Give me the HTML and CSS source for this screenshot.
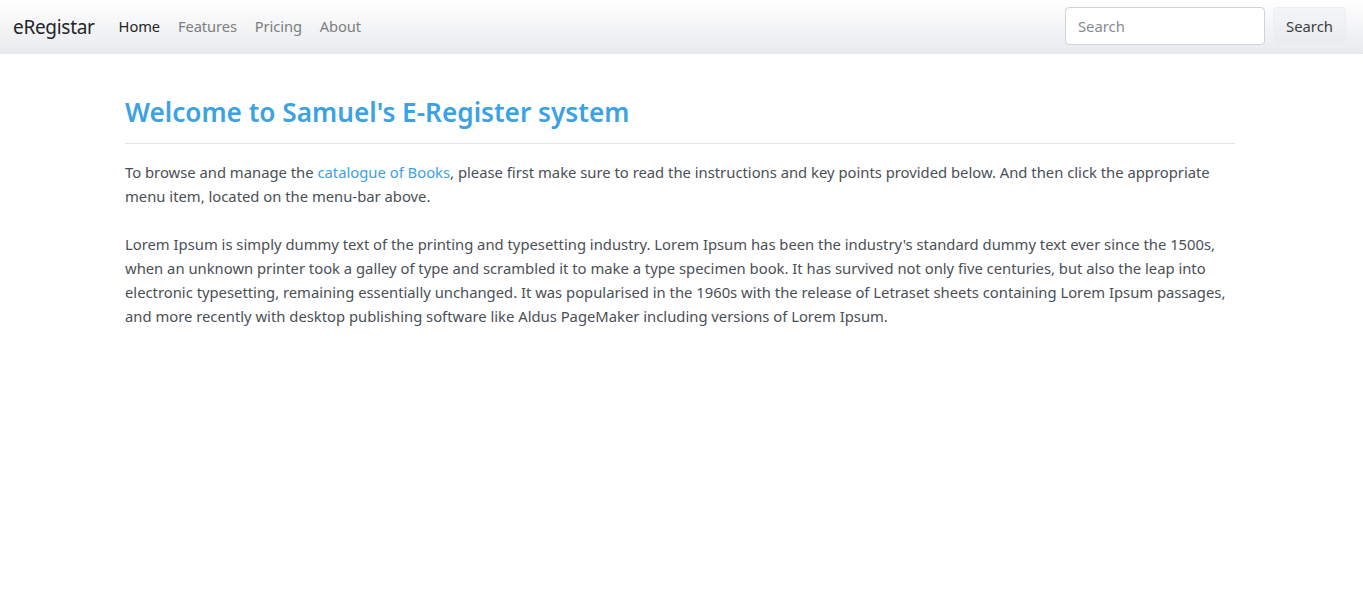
FILE: index.html
```html
<!DOCTYPE html>
<html lang="en">
<head>
<meta charset="utf-8">
<title>eRegistar</title>
<link rel="stylesheet" href="styles.css">
</head>
<body>
<nav class="navbar">
  <a class="brand" href="#">eRegistar</a>
  <ul class="nav">
    <li><a class="nav-link active" href="#">Home</a></li>
    <li><a class="nav-link" href="#">Features</a></li>
    <li><a class="nav-link" href="#">Pricing</a></li>
    <li><a class="nav-link" href="#">About</a></li>
  </ul>
  <form class="search">
    <input class="search-input" type="text" placeholder="Search">
    <button class="search-btn" type="button">Search</button>
  </form>
</nav>
<main class="container">
  <h2 class="title">Welcome to Samuel's E-Register system</h2>
  <hr class="rule">
  <p class="text">To browse and manage the <a class="link" href="#">catalogue of Books</a>, please first make sure to read the instructions and key points provided below. And then click the appropriate menu item, located on the menu-bar above.</p>
  <p class="text">Lorem Ipsum is simply dummy text of the printing and typesetting industry. Lorem Ipsum has been the industry's standard dummy text ever since the 1500s, when an unknown printer took a galley of type and scrambled it to make a type specimen book. It has survived not only five centuries, but also the leap into electronic typesetting, remaining essentially unchanged. It was popularised in the 1960s with the release of Letraset sheets containing Lorem Ipsum passages, and more recently with desktop publishing software like Aldus PageMaker including versions of Lorem Ipsum.</p>
</main>
</body>
</html>
```

FILE: styles.css
```css
* { box-sizing: border-box; }
html, body { margin: 0; padding: 0; }
body {
  font-family: "Noto Sans", "Open Sans", sans-serif;
  font-size: 14.8px;
  line-height: 24px;
  color: #4a5056;
  background: #fff;
}
.navbar {
  height: 54px;
  display: flex;
  align-items: center;
  padding: 0 17px 0 13px;
  background: linear-gradient(to bottom, #ffffff 0%, #e8eaed 100%);
}
.brand {
  font-size: 19px;
  color: #222529;
  text-decoration: none;
  margin-right: 15px;
  letter-spacing: -0.3px;
  margin-top: -1px;
}
.nav {
  display: flex;
  list-style: none;
  margin: -2px 0 0;
  padding: 0;
  flex: 1;
}
.nav-link {
  display: block;
  padding: 8px 9px;
  font-size: 14.7px;
  color: #7c7e80;
  text-decoration: none;
  letter-spacing: -0.1px;
}
.nav-link.active { color: #1f1f22; }
.search {
  display: flex;
  align-items: center;
  gap: 8px;
  margin: -2px 0 0;
}
.search-input {
  width: 200px;
  height: 38px;
  border: 1px solid #ced4da;
  border-radius: 4px;
  padding: 6px 12px;
  font-family: inherit;
  font-size: 14.8px;
  color: #495057;
  background: #fff;
}
.search-input::placeholder { color: #858b91; }
.search-btn {
  height: 38px;
  width: 73px;
  padding: 6px 0;
  border: 1px solid #eceef0;
  border-radius: 4px;
  background: linear-gradient(to bottom, #f4f5f6, #e9ebed);
  font-family: inherit;
  font-size: 14.8px;
  color: #3b3f44;
}
.container {
  width: 1110px;
  margin: 0 auto;
  position: relative;
  left: -1.5px;
}
.title {
  margin: 40px 0 0;
  font-size: 26.2px;
  line-height: 36px;
  font-weight: 600;
  color: #3ba2e4;
}
.rule {
  margin: 13px 0 16px;
  border: 0;
  border-top: 1px solid #e3e5e7;
}
.text {
  margin: 0 0 24px;
}
.link { color: #3ba2e4; text-decoration: none; }
```
